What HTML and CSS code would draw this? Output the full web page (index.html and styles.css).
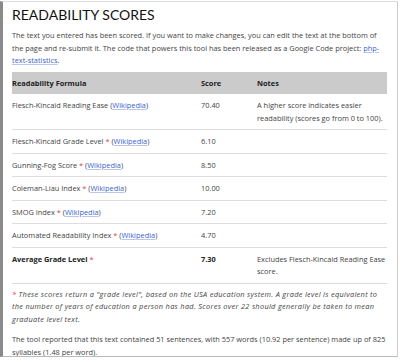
FILE: index.html
```html
<!DOCTYPE html>
<html lang="en">
<head>
    <meta charset="UTF-8">
    <title>Readability Scores</title>
    <link rel="stylesheet" href="styles.css">
</head>
<body>
<div class="frame">
    <h1 class="title">READABILITY SCORES</h1>

    <p class="intro">The text you entered has been scored. If you want to make changes, you can edit the text at the bottom of the page and re-submit it. The code that powers this tool has been released as a Google Code project: <a href="#">php-text-statistics</a>.</p>

    <!-- Scores table -->
    <table class="scores">
        <thead>
            <tr>
                <th class="col-formula">Readability Formula</th>
                <th class="col-score">Score</th>
                <th class="col-notes">Notes</th>
            </tr>
        </thead>
        <tbody>
            <tr>
                <td>Flesch-Kincaid Reading Ease (<a href="#">Wikipedia</a>)</td>
                <td>70.40</td>
                <td>A higher score indicates easier readability (scores go from 0 to 100).</td>
            </tr>
            <tr>
                <td>Flesch-Kincaid Grade Level <span class="star">*</span> (<a href="#">Wikipedia</a>)</td>
                <td>6.10</td>
                <td></td>
            </tr>
            <tr>
                <td>Gunning-Fog Score <span class="star">*</span> (<a href="#">Wikipedia</a>)</td>
                <td>8.50</td>
                <td></td>
            </tr>
            <tr>
                <td>Coleman-Liau Index <span class="star">*</span> (<a href="#">Wikipedia</a>)</td>
                <td>10.00</td>
                <td></td>
            </tr>
            <tr>
                <td>SMOG Index <span class="star">*</span> (<a href="#">Wikipedia</a>)</td>
                <td>7.20</td>
                <td></td>
            </tr>
            <tr>
                <td>Automated Readability Index <span class="star">*</span> (<a href="#">Wikipedia</a>)</td>
                <td>4.70</td>
                <td></td>
            </tr>
            <tr class="average">
                <td><strong>Average Grade Level</strong> <span class="star">*</span></td>
                <td><strong>7.30</strong></td>
                <td>Excludes Flesch-Kincaid Reading Ease score.</td>
            </tr>
        </tbody>
    </table>

    <p class="footnote"><span class="star">*</span> These scores return a "grade level", based on the USA education system. A grade level is equivalent to the number of years of education a person has had. Scores over 22 should generally be taken to mean graduate level text.</p>

    <p class="summary">The tool reported that this text contained 51 sentences, with 557 words (10.92 per sentence) made up of 825 syllables (1.48 per word).</p>
</div>
</body>
</html>
```

FILE: styles.css
```css
body {
    margin: 0;
    background-color: #fff;
}

.frame {
    height: 356px;
    margin-top: 1px;
    border-top: 1px solid #ddd;
    border-left: 3px solid #8a8a8a;
    border-right: 1px solid #ccc;
    border-bottom: 1px solid #bbb;
    width: 398px;
    padding: 0 10px 0 9px;
    box-sizing: border-box;
    font-family: "Open Sans", sans-serif;
    font-size: 7.4px;
    line-height: 12.5px;
    color: #444;
    overflow: hidden;
}

.title {
    margin: 4px 0 5px;
    font-family: "Lato", sans-serif;
    font-weight: normal;
    font-size: 14px;
    line-height: 18px;
    color: #111;
}

.intro {
    margin: 0 0 5px;
}

a {
    color: #3a5fcd;
    text-decoration: underline;
    text-decoration-color: #b9c5ec;
    text-underline-offset: 1px;
}

.star {
    color: #e04040;
}

/* Table */
.scores {
    width: 100%;
    border-collapse: collapse;
}

.scores th {
    background-color: #cbcbcb;
    color: #222;
    font-weight: bold;
    text-align: left;
    padding: 5px 0;
    height: 22px;
    box-sizing: border-box;
}

.scores td {
    padding: 5px 0;
    border-bottom: 1px solid #ddd;
    vertical-align: top;
}

.col-formula {
    width: 189px;
}

.col-score {
    width: 56px;
}

.scores strong {
    color: #222;
}

.footnote {
    margin: 4px 0 8px;
    font-style: italic;
    letter-spacing: 0.3px;
}

.summary {
    margin: 0;
}
```
